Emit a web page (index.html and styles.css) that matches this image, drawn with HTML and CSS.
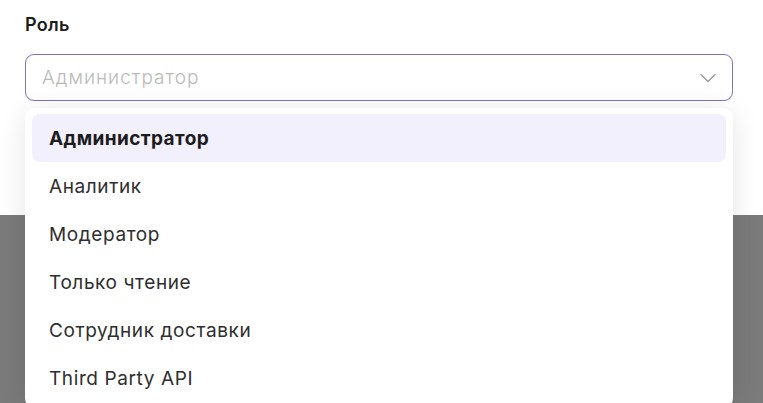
FILE: index.html
```html
<!DOCTYPE html>
<html lang="ru">
<head>
<meta charset="utf-8">
<link rel="stylesheet" href="styles.css">
</head>
<body>
<div class="page">
  <div class="card">
    <div class="field">
      <div class="label">Роль</div>
      <div class="select">
        <span class="placeholder">Администратор</span>
        <svg class="chevron" width="16" height="10" viewBox="0 0 16 10"><path d="M1 1.5 L8 8.5 L15 1.5" fill="none" stroke="#9a9a9a" stroke-width="1.4" stroke-linecap="round" stroke-linejoin="round"/></svg>
      </div>
      <ul class="menu">
        <li class="item active">Администратор</li>
        <li class="item">Аналитик</li>
        <li class="item">Модератор</li>
        <li class="item">Только чтение</li>
        <li class="item">Сотрудник доставки</li>
        <li class="item">Third Party API</li>
      </ul>
    </div>
  </div>
</div>
</body>
</html>
```

FILE: styles.css
```css
html, body {
  margin: 0;
  padding: 0;
}
body {
  background: #7b7b7b;
  font-family: "Inter", "Lato", sans-serif;
  width: 763px;
  height: 403px;
  overflow: hidden;
}
.page {
  height: 403px;
}
.card {
  background: #ffffff;
  height: 215px;
  padding: 0 30px 0 25px;
  box-sizing: border-box;
}
.field {
  position: relative;
  padding-top: 13px;
}
.label {
  font-size: 18px;
  font-weight: 600;
  color: #1c1c1c;
  line-height: 24px;
  margin-bottom: 17px;
  letter-spacing: 0.3px;
}
.select {
  height: 47px;
  box-sizing: border-box;
  border: 1.5px solid #7d72c4;
  border-radius: 9px;
  display: flex;
  align-items: center;
  justify-content: space-between;
  padding: 0 16px 0 16px;
}
.placeholder {
  font-size: 19px;
  font-weight: 300;
  color: #b9b9b9;
  letter-spacing: 1px;
}
.chevron {
  display: block;
}
.menu {
  position: absolute;
  left: 0;
  right: 0;
  top: 108px;
  margin: 0;
  list-style: none;
  background: #ffffff;
  border-radius: 10px;
  padding: 6px 7px;
  box-shadow: 0 4px 28px rgba(0, 0, 0, 0.11);
}
.item {
  height: 48px;
  display: flex;
  align-items: center;
  padding: 0 17px;
  font-size: 19px;
  font-weight: 400;
  color: #2e2e2e;
  border-radius: 8px;
  letter-spacing: 0.6px;
}
.item.last-latin {
  letter-spacing: 0.3px;
}
.item.active {
  background: #f3f0fd;
  font-weight: 700;
  color: #1c1c1c;
  letter-spacing: 0.4px;
}
```
